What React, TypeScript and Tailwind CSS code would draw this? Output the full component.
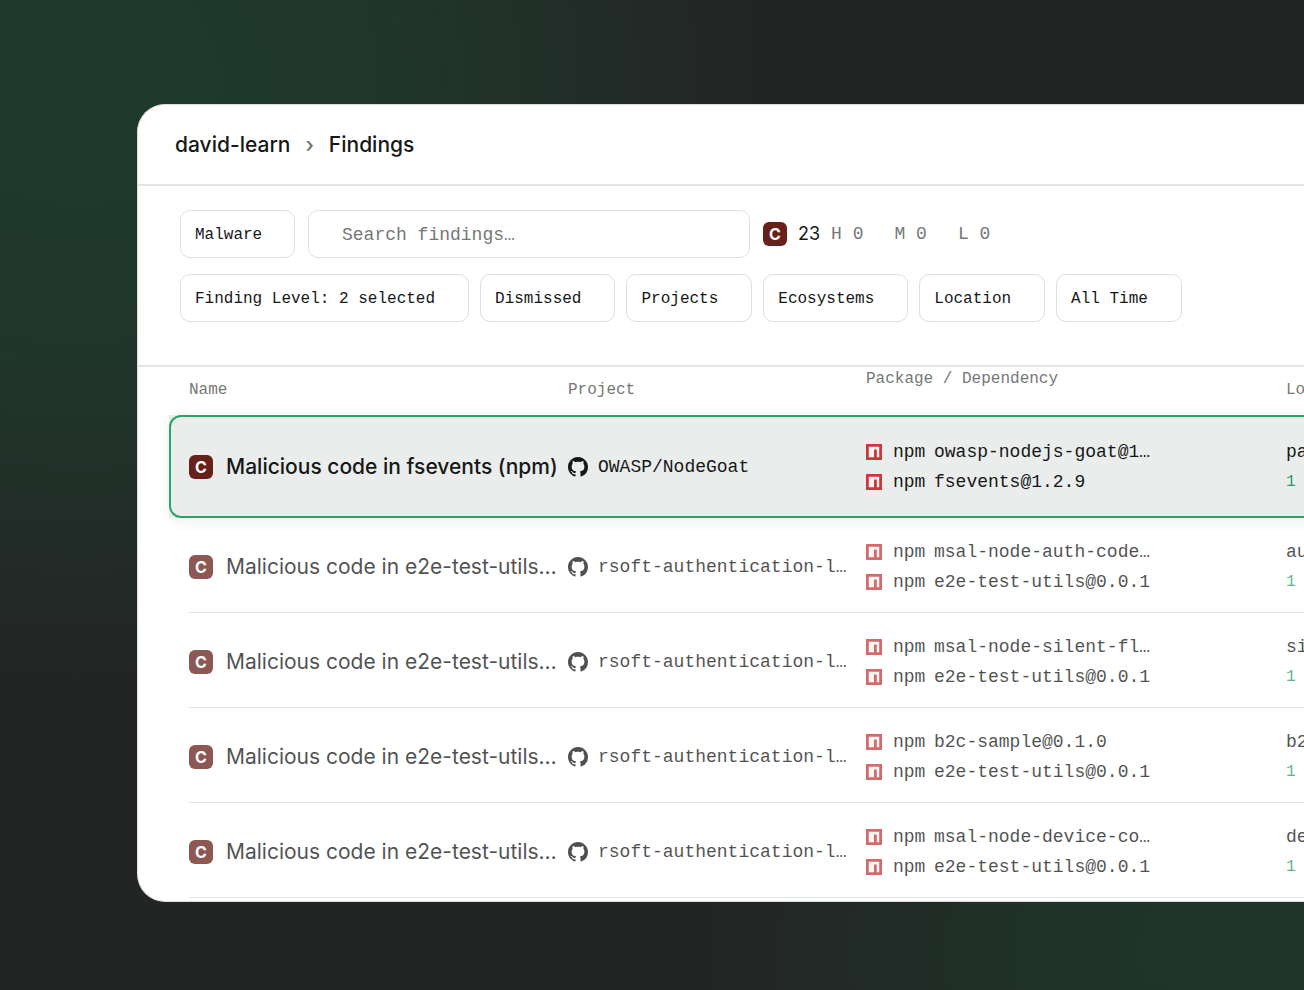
import React from "react";

const mono = "font-['Liberation_Mono',monospace]";

function SeverityBadge() {
  return (
    <span className="flex size-6 shrink-0 items-center justify-center rounded-md bg-[#68201b] text-base font-bold leading-none text-white">
      C
    </span>
  );
}

function NpmIcon() {
  return (
    <svg viewBox="0 0 16 16" className="size-4 shrink-0" aria-hidden="true">
      <path fill="#c9383b" d="M0 0h16v16H0z" />
      <path fill="#f7f4f3" d="M2.8 2.8h10.4v10.4h-2.4V5.6H8v7.6H2.8z" />
    </svg>
  );
}

function GithubIcon() {
  return (
    <svg viewBox="0 0 16 16" className="size-5 shrink-0" fill="currentColor" aria-hidden="true">
      <path d="M8 0C3.58 0 0 3.58 0 8c0 3.54 2.29 6.53 5.47 7.59.4.07.55-.17.55-.38 0-.19-.01-.82-.01-1.49-2.01.37-2.53-.49-2.69-.94-.09-.23-.48-.94-.82-1.13-.28-.15-.68-.52-.01-.53.63-.01 1.08.58 1.23.82.72 1.21 1.87.87 2.33.66.07-.52.28-.87.51-1.07-1.78-.2-3.64-.89-3.64-3.95 0-.87.31-1.59.82-2.15-.08-.2-.36-1.02.08-2.12 0 0 .67-.21 2.2.82.64-.18 1.32-.27 2-.27s1.36.09 2 .27c1.53-1.04 2.2-.82 2.2-.82.44 1.1.16 1.92.08 2.12.51.56.82 1.27.82 2.15 0 3.07-1.87 3.75-3.65 3.95.29.25.54.73.54 1.48 0 1.07-.01 1.93-.01 2.2 0 .21.15.46.55.38A8.01 8.01 0 0 0 16 8c0-4.42-3.58-8-8-8z" />
    </svg>
  );
}

const filters = ["Finding Level: 2 selected", "Dismissed", "Projects", "Ecosystems", "Location", "All Time"];

type Finding = { name: string; project: string; pkg: string; dep: string; file: string; active?: boolean };

const findings: Finding[] = [
  { name: "Malicious code in fsevents (npm)", project: "OWASP/NodeGoat", pkg: "owasp-nodejs-goat@1…", dep: "fsevents@1.2.9", file: "pa", active: true },
  { name: "Malicious code in e2e-test-utils…", project: "rsoft-authentication-l…", pkg: "msal-node-auth-code…", dep: "e2e-test-utils@0.0.1", file: "au" },
  { name: "Malicious code in e2e-test-utils…", project: "rsoft-authentication-l…", pkg: "msal-node-silent-fl…", dep: "e2e-test-utils@0.0.1", file: "si" },
  { name: "Malicious code in e2e-test-utils…", project: "rsoft-authentication-l…", pkg: "b2c-sample@0.1.0", dep: "e2e-test-utils@0.0.1", file: "b2" },
  { name: "Malicious code in e2e-test-utils…", project: "rsoft-authentication-l…", pkg: "msal-node-device-co…", dep: "e2e-test-utils@0.0.1", file: "de" },
];

function PackageLine({ label }: { label: string }) {
  return (
    <div className="flex h-[30px] items-center whitespace-nowrap">
      <NpmIcon />
      <span className="ml-[11px] w-[41px]">npm</span>
      <span>{label}</span>
    </div>
  );
}

function Row({ f }: { f: Finding }) {
  const frame = f.active
    ? "h-[103px] rounded-xl bg-[#ebedec] outline-2 -outline-offset-2 outline-[#25a566] shadow-[0_4px_14px_rgba(20,90,55,0.08)]"
    : "h-[95px]";
  const cell = f.active ? "p-0" : "border-b border-[#e4e6e5] p-0 pt-1";
  const ink = f.active ? "text-[#151817]" : "opacity-75 text-[#151817]";
  const inner = "flex items-center whitespace-nowrap";
  return (
    <tr className={frame}>
      <td className="p-0" />
      <td className={cell}>
        <div className={`${inner} ${ink} gap-[13px] text-[21px] ${f.active ? "font-medium" : ""}`}>
          <SeverityBadge />
          {f.name}
        </div>
      </td>
      <td className={cell}>
        <div className={`${inner} ${ink} ${mono} gap-[10px] text-lg`}>
          <GithubIcon />
          {f.project}
        </div>
      </td>
      <td className={cell}>
        <div className={`${ink} ${mono} text-lg`}>
          <PackageLine label={f.pkg} />
          <PackageLine label={f.dep} />
        </div>
      </td>
      <td className={cell}>
        <div className={`${ink} ${mono} text-lg leading-[30px] whitespace-nowrap`}>
          <div>{f.file}</div>
          <a href="#paths" className="block text-base leading-[30px] text-[#1f9f60]">1</a>
        </div>
      </td>
    </tr>
  );
}

export default function App() {
  const th = "p-0 pb-0.5 text-left font-normal whitespace-nowrap";
  return (
    <div className="min-h-screen overflow-hidden bg-[#232525] bg-[radial-gradient(ellipse_680px_600px_at_6%_8%,#1f3b2d_0%,#1f3a2dcc_45%,transparent_100%),radial-gradient(ellipse_600px_380px_at_100%_96%,#1e372a_0%,#1e362acc_40%,transparent_100%)] pt-[104px] pl-[137px] font-[Inter,sans-serif] text-[#151817]">
      <main className="h-[798px] overflow-hidden rounded-l-[28px] border border-r-0 border-[#d9dcda] bg-white">
        <nav aria-label="Breadcrumb" className="flex h-[81px] items-center gap-[15px] border-b-2 border-[#e2e4e3] pl-[37px] text-[21px] font-medium">
          <a href="#org">david-learn</a>
          <span className="text-[#6c706e]">›</span>
          <a href="#findings">Findings</a>
        </nav>

        <section className={`h-[181px] border-b-2 border-[#e4e6e5] pt-6 pl-[42px] ${mono}`}>
          <div className="flex items-center gap-[13px]">
            <button className="h-12 w-[115px] rounded-[10px] border border-[#dcdfdd] pt-0.5 pl-[14px] text-left text-base">Malware</button>
            <input
              type="search"
              aria-label="Search findings"
              placeholder="Search findings…"
              className="h-12 w-[442px] rounded-[10px] border border-[#dcdfdd] pt-0.5 pl-[33px] text-lg placeholder:text-[#747876]"
            />
            <div className="flex items-center text-lg text-[#747876]">
              <span className="flex items-center gap-[11px] font-[Inter,sans-serif] text-[#151817]">
                <SeverityBadge />
                23
              </span>
              <span className="ml-[11px]">H 0</span>
              <span className="ml-[31px]">M 0</span>
              <span className="ml-[31px]">L 0</span>
            </div>
          </div>
          <div className="mt-4 flex gap-[11px] text-base">
            {filters.map((f) => (
              <button key={f} className="h-12 rounded-[10px] border border-[#dcdfdd] pt-0.5 pr-[33px] pl-[14px] text-left whitespace-nowrap">
                {f}
              </button>
            ))}
          </div>
        </section>

        <div className="pl-[31px]">
          <table className="w-[calc(100%+64px)] min-w-[1200px] table-fixed border-separate border-spacing-0">
            <colgroup>
              <col className="w-5" />
              <col className="w-[379px]" />
              <col className="w-[298px]" />
              <col className="w-[420px]" />
              <col />
            </colgroup>
            <thead>
              <tr className={`h-12 text-base text-[#747876] ${mono}`}>
                <td className="p-0" />
                <th scope="col" className={th}>Name</th>
                <th scope="col" className={th}>Project</th>
                <th scope="col" className={`${th} align-top`}>Package / Dependency</th>
                <th scope="col" className={th}>Lo</th>
              </tr>
            </thead>
            <tbody>
              {findings.map((f, i) => (
                <Row key={i} f={f} />
              ))}
            </tbody>
          </table>
        </div>
      </main>
    </div>
  );
}
